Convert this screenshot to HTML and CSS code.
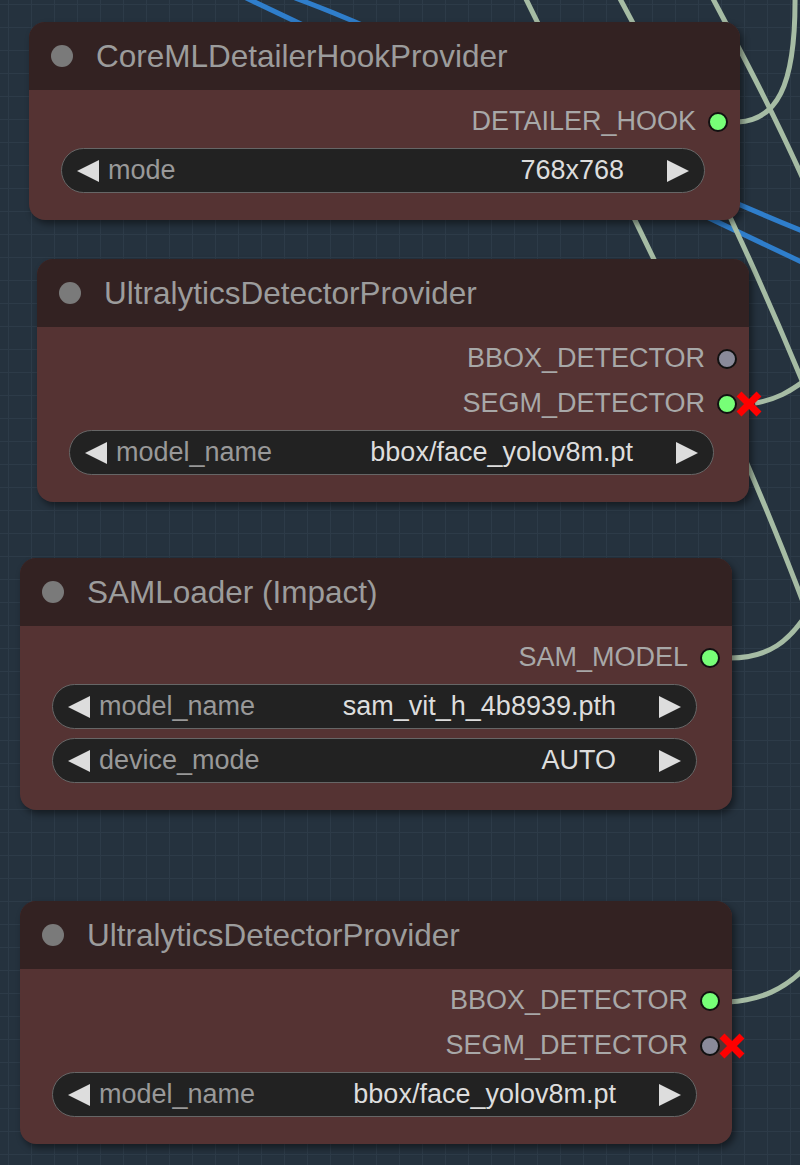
FILE: index.html
```html
<!DOCTYPE html>
<html lang="en">
<head>
    <meta charset="UTF-8">
    <title>Impact Pack nodes</title>
    <link rel="stylesheet" href="styles.css">
</head>
<body>

<div class="canvas">
    <svg class="links" width="800" height="1165" viewBox="0 0 800 1165">
        <path class="link blue" d="M 240 -5 L 810 266"/>
        <path class="link blue" d="M 295 -2 C 450 55, 600 150, 810 234"/>
        <path class="link sage" d="M 524 -5 C 600 150, 720 380, 808 615"/>
        <path class="link sage" d="M 618 -5 C 680 110, 740 230, 808 395"/>
        <path class="link sage" d="M 711 -5 C 740 50, 775 115, 808 190"/>
        <path class="link sage" d="M 738 122 C 775 120, 796 90, 795 -5"/>
        <path class="link sage" d="M 755 403 C 775 400, 790 392, 808 378"/>
        <path class="link sage" d="M 730 658 C 770 658, 790 640, 808 612"/>
        <path class="link sage" d="M 728 1002 C 760 1000, 785 990, 808 965"/>
    </svg>

    <!-- CoreML hook -->
    <div class="node node-hook">
        <div class="node-title"><span class="title-dot"></span>CoreMLDetailerHookProvider</div>
        <div class="node-body">
            <div class="outputs">
                <div class="slot">DETAILER_HOOK<span class="dot on"></span></div>
            </div>
            <div class="widgets">
                <div class="widget">
                    <span class="arrow left"></span>
                    <span class="w-label">mode</span>
                    <span class="w-value">768x768</span>
                    <span class="arrow right"></span>
                </div>
            </div>
        </div>
    </div>

    <!-- first detector -->
    <div class="node node-det1">
        <div class="node-title"><span class="title-dot"></span>UltralyticsDetectorProvider</div>
        <div class="node-body">
            <div class="outputs">
                <div class="slot">BBOX_DETECTOR<span class="dot"></span></div>
                <div class="slot">SEGM_DETECTOR<span class="dot on"></span>
                    <svg class="cut" viewBox="0 0 28 28"><path d="M 4 4 L 24 24 M 24 4 L 4 24"/></svg>
                </div>
            </div>
            <div class="widgets">
                <div class="widget">
                    <span class="arrow left"></span>
                    <span class="w-label">model_name</span>
                    <span class="w-value">bbox/face_yolov8m.pt</span>
                    <span class="arrow right"></span>
                </div>
            </div>
        </div>
    </div>

    <!-- SAM loader -->
    <div class="node node-sam">
        <div class="node-title"><span class="title-dot"></span>SAMLoader (Impact)</div>
        <div class="node-body">
            <div class="outputs">
                <div class="slot">SAM_MODEL<span class="dot on"></span></div>
            </div>
            <div class="widgets">
                <div class="widget">
                    <span class="arrow left"></span>
                    <span class="w-label">model_name</span>
                    <span class="w-value">sam_vit_h_4b8939.pth</span>
                    <span class="arrow right"></span>
                </div>
                <div class="widget">
                    <span class="arrow left"></span>
                    <span class="w-label">device_mode</span>
                    <span class="w-value">AUTO</span>
                    <span class="arrow right"></span>
                </div>
            </div>
        </div>
    </div>

    <!-- second detector -->
    <div class="node node-det2">
        <div class="node-title"><span class="title-dot"></span>UltralyticsDetectorProvider</div>
        <div class="node-body">
            <div class="outputs">
                <div class="slot">BBOX_DETECTOR<span class="dot on"></span></div>
                <div class="slot">SEGM_DETECTOR<span class="dot"></span>
                    <svg class="cut" viewBox="0 0 28 28"><path d="M 4 4 L 24 24 M 24 4 L 4 24"/></svg>
                </div>
            </div>
            <div class="widgets">
                <div class="widget">
                    <span class="arrow left"></span>
                    <span class="w-label">model_name</span>
                    <span class="w-value">bbox/face_yolov8m.pt</span>
                    <span class="arrow right"></span>
                </div>
            </div>
        </div>
    </div>
</div>

</body>
</html>
```

FILE: styles.css
```css
body {
    margin: 0;
    padding: 0;
    font-family: "Liberation Sans", Arial, sans-serif;
    background-color: #25323e;
}

.canvas {
    position: relative;
    width: 800px;
    height: 1165px;
    overflow: hidden;
    background-color: #25323e;
    background-image:
        linear-gradient(to right, #2d3b48 1px, transparent 1px),
        linear-gradient(to bottom, #2d3b48 1px, transparent 1px);
    background-size: 23px 23px;
    background-position: 8px 4px;
}

.links {
    position: absolute;
    left: 0;
    top: 0;
}

.link {
    fill: none;
    stroke-width: 5;
}

.link.blue {
    stroke: #2f7ecb;
}

.link.sage {
    stroke: #a6bca4;
}

.node {
    position: absolute;
    width: 712px;
    background-color: #553333;
    border-radius: 16px;
    box-shadow: 3px 4px 7px rgba(0, 0, 0, 0.45);
}

.node-hook {
    left: 29px;
    top: 22px;
    width: 711px;
}

.node-det1 {
    left: 37px;
    top: 259px;
}

.node-sam {
    left: 20px;
    top: 558px;
}

.node-det2 {
    left: 20px;
    top: 901px;
}

.node-title {
    height: 68px;
    display: flex;
    align-items: center;
    padding-left: 22px;
    background-color: #332222;
    border-radius: 16px 16px 0 0;
    color: #9c9c9c;
    font-size: 31.5px;
}

.title-dot {
    width: 22px;
    height: 22px;
    margin-right: 23px;
    border-radius: 50%;
    background-color: #7a7a7a;
}

.node-body {
    padding: 9px 0 27px 0;
}

.slot {
    position: relative;
    height: 45px;
    display: flex;
    justify-content: flex-end;
    align-items: center;
    padding-right: 12px;
    color: #a8a8a8;
    font-size: 27px;
}

.dot {
    box-sizing: border-box;
    width: 20px;
    height: 20px;
    margin-left: 12px;
    border-radius: 50%;
    border: 2px solid #111;
    background-color: #8a8a9a;
}

.dot.on {
    background-color: #77ff77;
}

.cut {
    position: absolute;
    right: -14px;
    top: 50%;
    width: 28px;
    height: 28px;
    margin-top: -14px;
}

.cut path {
    stroke: #ff0000;
    stroke-width: 7;
    fill: none;
}

.widgets {
    margin: 4px 35px 0 32px;
    display: flex;
    flex-direction: column;
    gap: 9px;
}

.widget {
    box-sizing: border-box;
    height: 45px;
    display: flex;
    align-items: center;
    padding: 0 15px;
    background-color: #222;
    border: 1.5px solid #666;
    border-radius: 23px;
    font-size: 27px;
}

.arrow {
    width: 0;
    height: 0;
    border-top: 11px solid transparent;
    border-bottom: 11px solid transparent;
}

.arrow.left {
    border-right: 22px solid #ddd;
}

.arrow.right {
    border-left: 22px solid #ddd;
}

.w-label {
    margin-left: 9px;
    color: #999;
}

.w-value {
    flex: 1;
    margin-right: 43px;
    text-align: right;
    color: #ddd;
}
```
